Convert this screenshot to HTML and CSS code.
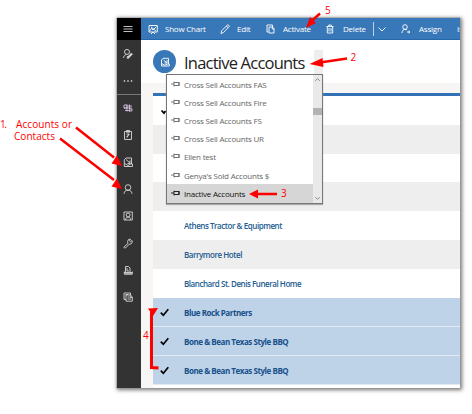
FILE: index.html
```html
<!DOCTYPE html>
<html lang="en">
<head>
<meta charset="utf-8">
<title>Inactive Accounts</title>
<link rel="stylesheet" href="styles.css">
</head>
<body>
<div class="window">
  <nav class="sidebar">
    <div class="menu"><svg viewBox="0 0 12 12"><path d="M1.500 3.500h9M1.500 6h9M1.500 8.500h9"/></svg></div>
    <div class="nav"><svg viewBox="0 0 12 12"><circle cx="5" cy="3.900" r="2.500"/><path d="M1.500 10c.2-2 1.400-3.200 3-3.500"/><path class="thick" d="M6 9.500l3.800-3.800"/><path d="M5.500 8l-.4 2.300 2.100-.3M9 4.800l1.600 1.600"/></svg></div>
    <div class="nav dots"><svg viewBox="0 0 12 12"><path d="M1.800 6h1.400M5.300 6h1.400M8.800 6h1.400"/></svg></div>
    <div class="nav split"><svg class="tinted" viewBox="0 0 12 12"><path d="M2 3h3v3H2zM5 2.500v7M7.500 2.500v7M3 8.500h5M6 4h4M2 6h8M8 7h2v2H7"/></svg></div>
    <div class="nav"><svg viewBox="0 0 12 12"><path d="M2.500 2.500h7v8h-7zM4.500 1.500h3v1.700h-3zM4.500 5h2.700L5 7.500v1.200"/><path d="M7.300 5L5 8"/></svg></div>
    <div class="nav"><svg viewBox="0 0 12 12"><path d="M4 2h5.500v6M4 2L2.300 3.800V10.500h8.200V8H8L7 9.200H5L4 8H2.300M4 3.500l4 3.500M8 4.500v3H5.500"/></svg></div>
    <div class="nav"><svg viewBox="0 0 12 12"><circle cx="6" cy="4.500" r="2.800"/><path d="M2 10.800c.2-2.200 1.400-3.600 4-3.600s3.800 1.400 4 3.600"/></svg></div>
    <div class="nav"><svg viewBox="0 0 12 12"><path d="M2 2h8.300v8H2z"/><circle cx="6.100" cy="5" r="1.900"/><path d="M3.500 9.800c.2-1.700 1-2.700 2.600-2.700s2.400 1 2.600 2.700"/></svg></div>
    <div class="nav"><svg viewBox="0 0 12 12"><path d="M6 6.300L2.200 9.800q-.5.8.2 1.200t1.200-.1L7.200 7.200q2 .2 2.700-1.200t.1-2.600L8.500 4.700 7.400 3.800l1.200-1.600Q6.800 1.800 6 3.200T6 6.300z"/></svg></div>
    <div class="nav"><svg viewBox="0 0 12 12"><path d="M3.500 8.300V2.500h3L8 4v4.300M5 4v3h2M2.300 7.500v2.500h8V7.500M2.300 10h8M2.300 8.500h8"/></svg></div>
    <div class="nav"><svg viewBox="0 0 12 12"><path d="M4 8.500H2V2h6.500v2M4 4h4.500l1.800 2v4.200H4zM3.500 3.500h3M5.500 6h2M5.500 8h3.500M8.300 4.500v2H10"/></svg></div>
  </nav>
  <main class="main">
    <header class="commands">
      <span class="cmd chart"><svg viewBox="0 0 12 12"><path d="M2 2.500h8.300v6.500H2zM2.500 8l2-2.500L6 7l3.500-3.500M4 11l2-2 2 2M4 4l5 4"/></svg><b>Show Chart</b></span>
      <span class="cmd edit"><svg viewBox="0 0 12 12"><path d="M2 10.500l.6-2.700 6-6q1.200 0 1.800 1.500l-6 6.300zM7.300 3l1.800 1.800"/></svg><b>Edit</b></span>
      <span class="cmd activate"><svg viewBox="0 0 12 12"><path d="M8.500 4V2H3v7h1.500M5 4h3.500L10 5.500V10H5zM8.300 4v2H10"/></svg><b>Activate</b></span>
      <span class="cmd delete"><svg viewBox="0 0 12 12"><path d="M2.500 3.500h7M4.700 3.300V2h2.600v1.300M3.300 3.500V10h5.400V3.500M5 5v3.500M7 5v3.500"/></svg><b>Delete</b></span>
      <span class="more"><svg viewBox="0 0 12 12"><path d="M2.500 4.500L6 8l3.500-3.500"/></svg></span>
      <span class="cmd assign"><svg viewBox="0 0 12 12"><circle cx="5" cy="4" r="2.300"/><path d="M2 10c.2-2.500 1.300-3.600 3-3.600 1 0 1.600.3 2 .8M7 9h3M8.500 7.800L10 9l-1.500 1.200"/></svg><b>Assign</b></span>
      <span class="cmd"><b>Is</b></span>
    </header>
    <section class="title">
      <span class="badge"><svg viewBox="0 0 12 12"><path d="M4 2.300h5.500V8M4 2.300L2.500 4v6h7.800V8H8L7 9H5L4 8H2.500M4.500 4l3.500 3M8 4v3H5.500"/></svg></span>
      <h1>Inactive Accounts</h1>
    </section>
    <section class="content">
      <div class="grid">
        <div class="row"></div>
        <div class="row alt"></div>
        <div class="row"></div>
        <div class="row alt"></div>
        <div class="row"><a>Athens Tractor &amp; Equipment</a></div>
        <div class="row alt"><a>Barrymore Hotel</a></div>
        <div class="row"><a>Blanchard St. Denis Funeral Home</a></div>
        <div class="row selected"><svg viewBox="0 0 9 9"><path d="M.8 4.700l2.500 2.600 5-6"/></svg><a>Blue Rock Partners</a></div>
        <div class="row selected"><svg viewBox="0 0 9 9"><path d="M.8 4.700l2.500 2.600 5-6"/></svg><a>Bone &amp; Bean Texas Style BBQ</a></div>
        <div class="row selected"><svg viewBox="0 0 9 9"><path d="M.8 4.700l2.500 2.600 5-6"/></svg><a>Bone &amp; Bean Texas Style BBQ</a></div>
      </div>
    </section>
  </main>
</div>

<div class="dropdown">
  <ul>
    <li><svg viewBox="0 0 9 7"><path d="M0 3h3M3 .7v4.800M3 1.500h5v3H3M8 1v4"/></svg><span>Cross Sell Accounts FAS</span></li>
    <li><svg viewBox="0 0 9 7"><path d="M0 3h3M3 .7v4.800M3 1.500h5v3H3M8 1v4"/></svg><span>Cross Sell Accounts Fire</span></li>
    <li><svg viewBox="0 0 9 7"><path d="M0 3h3M3 .7v4.800M3 1.500h5v3H3M8 1v4"/></svg><span>Cross Sell Accounts FS</span></li>
    <li><svg viewBox="0 0 9 7"><path d="M0 3h3M3 .7v4.800M3 1.500h5v3H3M8 1v4"/></svg><span>Cross Sell Accounts UR</span></li>
    <li><svg viewBox="0 0 9 7"><path d="M0 3h3M3 .7v4.800M3 1.500h5v3H3M8 1v4"/></svg><span>Ellen test</span></li>
    <li><svg viewBox="0 0 9 7"><path d="M0 3h3M3 .7v4.800M3 1.500h5v3H3M8 1v4"/></svg><span>Genya's Sold Accounts $</span></li>
    <li class="current"><svg viewBox="0 0 9 7"><path d="M0 3h3M3 .7v4.800M3 1.500h5v3H3M8 1v4"/></svg><span>Inactive Accounts</span></li>
  </ul>
  <div class="scroll">
    <svg viewBox="0 0 10 8"><path d="M2.500 5.500L5 3l2.500 2.500"/></svg>
    <i></i>
    <svg viewBox="0 0 10 8"><path d="M2.500 2.500L5 5l2.500-2.500"/></svg>
  </div>
</div>

<svg class="notes" viewBox="0 0 472 414">
  <path class="tick" d="M161.500 110.500l2.500 2.600 1.500-2"/>
  <path class="stem" d="M76 127.500L114 157.500M60 138.500L114 180"/>
  <path class="head" d="M122 166l-10.500-2.500 5.500-8zM122 189l-10.500-2.500 5.500-8z"/>
  <path class="stem" d="M320 13.500L311 21.500M347 58.500L320 62.500M277 194h-20"/>
  <path class="head" d="M306 28l4-11 6 6zM309.500 64l13-6 1 9zM249 194l9-4.500v9z"/>
  <path class="stem bracket" d="M151.500 312v55.500l7 .5"/>
  <path class="head" d="M148 308.500l10-.5-5 8z"/>
  <g>
    <text x="0" y="127.500" textLength="7">1.</text>
    <text x="16" y="127.500" textLength="56">Accounts or</text>
    <text x="14" y="140" textLength="41">Contacts</text>
    <text x="350.500" y="60.500">2</text>
    <text x="281" y="197">3</text>
    <text x="143" y="338.500">4</text>
    <text x="325" y="14">5</text>
  </g>
</svg>
</body>
</html>
```
FILE: styles.css
```css
* { box-sizing: border-box; }
body {
  margin: 0;
  width: 472px;
  height: 414px;
  position: relative;
  overflow: hidden;
  padding: 18px 12px 26px 117px;
  background: #fff;
  font-family: "Open Sans", "Noto Sans", sans-serif;
  font-size: 8px;
}
svg { display: block; fill: none; stroke: currentColor; stroke-width: .9; }
.window {
  display: flex;
  width: 343px;
  height: 370px;
  background: #fff;
  box-shadow: 0 0 0 .5px #999, 1px 1px 4px 1px rgba(0,0,0,.55);
}
.sidebar {
  flex: none;
  width: 24px;
  display: flex;
  flex-direction: column;
  background: #333;
  color: #d8d8d8;
}
.sidebar svg { width: 12px; height: 12px; }
.menu {
  height: 22px;
  background: #000;
  display: grid;
  place-items: center;
  padding-right: 2px;
}
.nav { height: 27px; display: grid; place-items: center; padding-right: 2px; }
.nav .thick { stroke-width: 2; }
.dots svg { stroke-width: 1.500; }
.split { border-top: 1px solid #777; }
.tinted { color: #cfc0dc; }
.main { flex: 1; min-width: 0; display: flex; flex-direction: column; }
.commands {
  height: 22px;
  flex: none;
  display: flex;
  align-items: center;
  overflow: hidden;
  background: #3978b8;
  border-bottom: 1px solid #2568ac;
  color: #fff;
  padding-left: 6px;
}
.commands svg { width: 12px; height: 12px; }
.cmd { display: flex; align-items: center; flex: none; white-space: nowrap; }
.cmd b { font-weight: 400; letter-spacing: -.22px; }
.chart { width: 72px; gap: 6px; }
.edit { width: 45px; gap: 6px; }
.activate { width: 60px; gap: 7px; }
.delete { width: 49px; gap: 7px; }
.more { border-left: 1px solid #bed2e7; height: 14px; width: 27px; padding: 1px 0 0 2px; flex: none; }
.assign { width: 57px; gap: 7px; }
.title {
  height: 43px;
  flex: none;
  display: flex;
  align-items: center;
  gap: 8px;
  padding-left: 12px;
}
.badge {
  width: 23px;
  height: 23px;
  border-radius: 50%;
  background: #3978b8;
  color: #fff;
  display: grid;
  place-items: center;
}
.badge svg { width: 12px; height: 12px; }
h1 {
  margin: 0;
  width: 139px;
  height: 24px;
  background: linear-gradient(to right, #fff 130px, #eee 130px);
  font-size: 16.500px;
  line-height: 25px;
  font-weight: 400;
  letter-spacing: -.78px;
  color: #222;
  white-space: nowrap;
}
.content { flex: 1; background: #f7f6f5; padding: 10px 0 0 12px; }
.grid { height: 295px; border-top: 3px solid #3272b5; background: #fff; }
.row {
  height: 29px;
  display: flex;
  align-items: center;
  padding: 0 0 1px 31px;
  color: #225c91;
  font-weight: 600;
  white-space: nowrap;
}
.row:nth-child(3) { height: 28px; }
.alt { background: #eee; }
.row a { letter-spacing: -.45px; }
.selected {
  background: #bed3e8;
  border-bottom: 1px solid #e3ebf2;
  padding: 0 0 0 7px;
  gap: 15px;
  color: #17508a;
  font-weight: 700;
}
.selected svg { width: 9px; height: 9px; color: #000; stroke-width: 1.700; }
.dropdown {
  position: absolute;
  left: 166px;
  top: 74px;
  width: 157px;
  height: 130px;
  border: 1px solid #777;
  background: #fff;
  box-shadow: 0 1px 1px #aaa;
  display: flex;
  overflow: hidden;
}
.dropdown ul { margin: 0; padding: 0; list-style: none; width: 146px; }
.dropdown li {
  height: 18.200px;
  display: flex;
  align-items: center;
  gap: 4px;
  padding-left: 4px;
  color: #666;
  letter-spacing: -.22px;
  white-space: nowrap;
}
.dropdown li svg { width: 9px; height: 7px; }
.dropdown .current { height: 19px; background: #d6d6d6; color: #111; }
.scroll {
  width: 9px;
  flex: 1;
  background: #e9e9e9;
  display: flex;
  flex-direction: column;
  justify-content: space-between;
  color: #777;
}
.scroll svg { width: 9px; height: 9px; }
.scroll i { height: 7px; background: #b3b3b3; margin-bottom: 56px; }
.notes { position: absolute; left: 0; top: 0; width: 472px; height: 414px; }
.notes .stem { stroke: #f00; stroke-width: 2.500; }
.notes .bracket { stroke-width: 3; }
.notes .head { fill: #f00; stroke: none; }
.notes .tick { stroke: #000; stroke-width: 1.700; }
.notes text { fill: #f00; stroke: none; font-size: 10px; }
```
